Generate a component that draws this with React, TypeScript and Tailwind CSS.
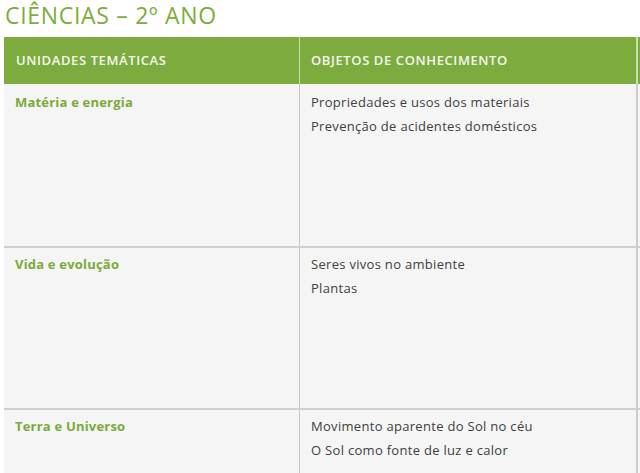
const rows = [
  {
    unit: 'Matéria e energia',
    items: ['Propriedades e usos dos materiais', 'Prevenção de acidentes domésticos'],
  },
  {
    unit: 'Vida e evolução',
    items: ['Seres vivos no ambiente', 'Plantas'],
  },
  {
    unit: 'Terra e Universo',
    items: ['Movimento aparente do Sol no céu', 'O Sol como fonte de luz e calor'],
  },
];

export default function App() {
  return (
    <div className="w-[640px] h-[473px] overflow-hidden bg-white font-['Open_Sans',sans-serif]">
      <h1 className="pl-[5px] pt-[1px] h-[37px] text-[23px] leading-[28px] text-[#7cad3a] tracking-[0.7px]">
        CIÊNCIAS – 2º ANO
      </h1>

      <div className="ml-[4px] w-[700px]">
        {/* Header */}
        <div className="grid grid-cols-[296px_338px_66px] h-[47px] bg-[#7dab3e] text-[13px] font-semibold tracking-[0.6px] text-[#f4f7ef]">
          <div className="flex items-center pl-[12px] border-r border-[#c9dfae]">UNIDADES TEMÁTICAS</div>
          <div className="flex items-center pl-[11px] border-r-2 border-[#c9dfae]">OBJETOS DE CONHECIMENTO</div>
          <div />
        </div>

        {rows.map((row, i) => (
          <div
            key={row.unit}
            className={`grid grid-cols-[296px_338px_66px] h-[162px] bg-[#f5f5f5] ${i > 0 ? 'border-t-2 border-[#cfcfcf]' : ''}`}
          >
            <div className={`pl-[11px] ${i > 0 ? 'pt-[7px]' : 'pt-[9px]'} border-r border-[#c8c8c8] text-[13px] font-bold tracking-[0.2px] text-[#7aab3a]`}>
              {row.unit}
            </div>
            <div className={`pl-[11px] ${i > 0 ? 'pt-[7px]' : 'pt-[9px]'} border-r-2 border-[#cccccc] text-[13px] tracking-[0.3px] text-[#404040] flex flex-col gap-[5px]`}>
              {row.items.map((it) => (
                <div key={it} className="leading-[19px]">{it}</div>
              ))}
            </div>
            <div />
          </div>
        ))}
      </div>
    </div>
  );
}
